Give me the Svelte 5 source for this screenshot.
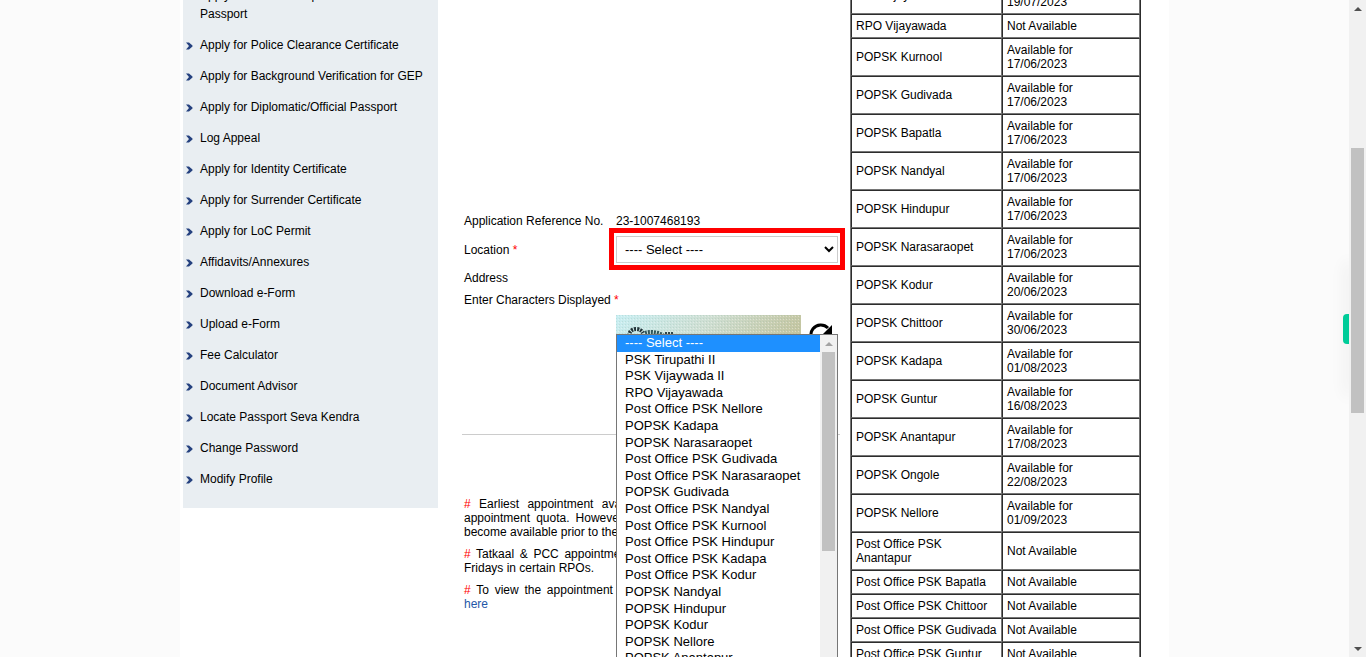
<script>
  const menu = [
    'Apply for Fresh Passport/Reissue of Passport',
    'Apply for Police Clearance Certificate',
    'Apply for Background Verification for GEP',
    'Apply for Diplomatic/Official Passport',
    'Log Appeal',
    'Apply for Identity Certificate',
    'Apply for Surrender Certificate',
    'Apply for LoC Permit',
    'Affidavits/Annexures',
    'Download e-Form',
    'Upload e-Form',
    'Fee Calculator',
    'Document Advisor',
    'Locate Passport Seva Kendra',
    'Change Password',
    'Modify Profile'
  ];

  const locations = [
    '---- Select ----',
    'PSK Tirupathi II',
    'PSK Vijaywada II',
    'RPO Vijayawada',
    'Post Office PSK Nellore',
    'POPSK Kadapa',
    'POPSK Narasaraopet',
    'Post Office PSK Gudivada',
    'Post Office PSK Narasaraopet',
    'POPSK Gudivada',
    'Post Office PSK Nandyal',
    'Post Office PSK Kurnool',
    'Post Office PSK Hindupur',
    'Post Office PSK Kadapa',
    'Post Office PSK Kodur',
    'POPSK Nandyal',
    'POPSK Hindupur',
    'POPSK Kodur',
    'POPSK Nellore',
    'POPSK Anantapur'
  ];

  // date is empty when no appointment is open
  const offices = [
    { name: 'PSK Vijaywada II', date: '19/07/2023' },
    { name: 'RPO Vijayawada', date: '' },
    { name: 'POPSK Kurnool', date: '17/06/2023' },
    { name: 'POPSK Gudivada', date: '17/06/2023' },
    { name: 'POPSK Bapatla', date: '17/06/2023' },
    { name: 'POPSK Nandyal', date: '17/06/2023' },
    { name: 'POPSK Hindupur', date: '17/06/2023' },
    { name: 'POPSK Narasaraopet', date: '17/06/2023' },
    { name: 'POPSK Kodur', date: '20/06/2023' },
    { name: 'POPSK Chittoor', date: '30/06/2023' },
    { name: 'POPSK Kadapa', date: '01/08/2023' },
    { name: 'POPSK Guntur', date: '16/08/2023' },
    { name: 'POPSK Anantapur', date: '17/08/2023' },
    { name: 'POPSK Ongole', date: '22/08/2023' },
    { name: 'POPSK Nellore', date: '01/09/2023' },
    { name: 'Post Office PSK Anantapur', date: '' },
    { name: 'Post Office PSK Bapatla', date: '' },
    { name: 'Post Office PSK Chittoor', date: '' },
    { name: 'Post Office PSK Gudivada', date: '' },
    { name: 'Post Office PSK Guntur', date: '' }
  ];

  let selected = $state(0);
</script>

<div class="window">
  <div class="view">
    <div class="page">
      <nav class="sidebar">
        <ul>
          {#each menu as item}
            <li>
              <svg width="7" height="8" viewBox="0 0 7 8" aria-hidden="true">
                <path d="M0 0.5H3L6.5 3.5V4.5L3 7.5H0L3 4Z" fill="#25417f" />
              </svg>
              <a href="#menu">{item}</a>
            </li>
          {/each}
        </ul>
      </nav>

      <main>
        <form>
          <span>Application Reference No.</span>
          <span>23-1007468193</span>

          <label for="location">Location <i>*</i></label>
          <div class="location">
            <select id="location" bind:value={selected}>
              {#each locations as name, i}
                <option value={i}>{name}</option>
              {/each}
            </select>
            <div class="highlight"></div>
            <div class="popup">
              <ul role="listbox" aria-label="Location">
                {#each locations as name, i}
                  <li role="option" aria-selected={selected === i} class:active={selected === i}>{name}</li>
                {/each}
              </ul>
              <div class="bar">
                <span class="up pale"></span>
                <div class="thumb"></div>
                <span class="down"></span>
              </div>
            </div>
          </div>

          <span>Address</span>
          <span></span>

          <span class="wide">Enter Characters Displayed <i>*</i></span>

          <div class="captcha">
            <svg width="185" height="50" viewBox="0 0 185 50" aria-hidden="true">
              <defs>
                <pattern id="dots" width="3" height="3" patternUnits="userSpaceOnUse">
                  <rect width="1" height="1" fill="#7fa594" opacity="0.2" />
                  <rect x="2" y="1" width="1" height="1" fill="#fff" opacity="0.35" />
                </pattern>
                <linearGradient id="wash" x1="0" y1="0" x2="1" y2="0.2">
                  <stop offset="0" stop-color="#c8eef2" />
                  <stop offset="0.5" stop-color="#cfdfd3" />
                  <stop offset="1" stop-color="#c4c6a2" />
                </linearGradient>
              </defs>
              <rect width="185" height="50" fill="url(#wash)" />
              <rect width="185" height="50" fill="url(#dots)" />
              <path d="M13 24C12 17 16 14 20 14S26 16 27 18" fill="none" stroke="#223338" stroke-width="4" stroke-dasharray="2 1" />
              <path d="M29 18C34 16 41 17 47 20" fill="none" stroke="#31565a" stroke-width="4" stroke-dasharray="2 1" />
              <path d="M49 18H57" stroke="#31464a" stroke-width="2" stroke-dasharray="2 1" />
            </svg>
            <button type="button" aria-label="Refresh characters">
              <svg width="24" height="26" viewBox="0 0 24 26">
                <path d="M21 17A10 10 0 1 1 19 6" fill="none" stroke="#000" stroke-width="3" />
                <path d="M23 3V12H14Z" />
              </svg>
            </button>
          </div>
        </form>

        <hr />

        <section class="notes">
          <p><b>#</b> Earliest appointment availability shown is based on the total appointment quota. However, more appointments could sometimes become available prior to the date shown.</p>
          <p><b>#</b> Tatkaal &amp; PCC appointments may not be made available on the Fridays in certain RPOs.</p>
          <p><b>#</b> To view the appointment availability status of all the PSKs, click <a href="#status">here</a></p>
        </section>
      </main>

      <table>
        <tbody>
          {#each offices as office}
            <tr>
              <td>{office.name}</td>
              <td>
                {#if office.date}
                  Available for<br />{office.date}
                {:else}
                  Not Available
                {/if}
              </td>
            </tr>
          {/each}
        </tbody>
      </table>
    </div>

    <div class="dock"><button type="button" aria-label="Open panel"></button></div>
  </div>

  <div class="bar main-bar">
    <span class="up"></span>
    <div class="thumb"></div>
    <span class="down"></span>
  </div>
</div>

<style>
  :global(body) {
    margin: 0;
    overflow: hidden;
  }

  .window {
    display: flex;
    height: 100vh;
    overflow: hidden;
    background: #fbfbfb;
    color: #000;
    font: 12px/14px "Liberation Sans", Arial, sans-serif;
  }

  .view {
    position: relative;
    flex: 1;
    overflow: hidden;
  }

  .page {
    box-sizing: border-box;
    display: flex;
    align-items: flex-start;
    max-width: 989px;
    min-height: 100%;
    margin: 0 auto;
    padding: 0 28px 0 3px;
    background: #fff;
  }

  ul {
    list-style: none;
    margin: 0;
    padding: 0;
  }

  /* sidebar */
  .sidebar {
    box-sizing: border-box;
    flex: 0 0 255px;
    margin-top: -20px;
    padding-bottom: 13px;
    background: #e9eef2;
  }

  .sidebar li {
    display: flex;
    align-items: flex-start;
    gap: 7px;
    padding: 6px 10px 6px 3px;
    line-height: 19px;
  }

  .sidebar svg {
    flex: none;
    margin-top: 6px;
  }

  .sidebar a {
    color: #000;
    text-decoration: none;
  }

  /* appointment form */
  main {
    flex: 1;
    min-width: 0;
    margin: 0 10px 0 24px;
    padding-top: 214px;
  }

  form {
    display: grid;
    grid-template-columns: 152px 1fr;
    gap: 8px 0;
    align-items: center;
    padding: 0 2px;
  }

  form > span {
    min-height: 14px;
    white-space: nowrap;
  }

  .wide {
    grid-column: 1 / -1;
  }

  i,
  b {
    color: #f00;
    font-style: normal;
    font-weight: normal;
  }

  .location {
    position: relative;
  }

  select {
    display: block;
    width: 100%;
    height: 27px;
    padding: 0 0 0 4px;
    border: 1px solid #ccc;
    border-radius: 0;
    outline: none;
    background-color: #fff;
    color: #000;
    font: 13px "Liberation Sans", Arial, sans-serif;
  }

  .highlight {
    position: absolute;
    inset: -8px -7px -7px -7px;
    border: 5px solid #f00;
    pointer-events: none;
  }

  .popup {
    position: absolute;
    z-index: 1;
    top: 98px;
    left: 0;
    right: 0;
    display: flex;
    border: 1px solid #767676;
    background: #fff;
    font-size: 13px;
  }

  .popup ul {
    display: grid;
    flex: 1;
    grid-auto-rows: 17px 16px 17px 16px 17px;
  }

  .popup li {
    padding-left: 8px;
    line-height: 15px;
    white-space: nowrap;
  }

  .popup .active {
    background: #1e90ff;
    color: #fff;
  }

  .captcha {
    grid-column: 2;
    display: flex;
    align-items: flex-start;
    gap: 8px;
  }

  .captcha svg {
    display: block;
  }

  .captcha button {
    margin-top: 7px;
    padding: 0;
    border: 0;
    background: none;
  }

  hr {
    margin: 69px 0 62px;
    border: 0;
    border-top: 1px solid #ccc;
  }

  .notes {
    padding: 0 4px 0 2px;
    text-align: justify;
  }

  .notes p {
    margin: 0 0 8px;
  }

  .notes a {
    color: #1f57a8;
    text-decoration: none;
  }

  /* availability table */
  table {
    flex: 0 0 291px;
    width: 291px;
    margin-top: -25px;
    border: 1px solid;
    border-color: #767676 #2c2c2c #2c2c2c #767676;
    border-spacing: 0;
    table-layout: fixed;
  }

  td {
    padding: 4px;
    border: 1px solid;
    border-color: #2c2c2c #767676 #767676 #2c2c2c;
  }

  td:first-child {
    width: 141px;
  }

  /* scrollbars */
  .bar {
    display: flex;
    flex: 0 0 17px;
    flex-direction: column;
    align-items: center;
    background: #f1f1f1;
  }

  .thumb {
    width: 13px;
    height: 199px;
    background: #c1c1c1;
  }

  .main-bar .thumb {
    height: 265px;
    margin-top: 131px;
  }

  .up,
  .down {
    display: flex;
    align-items: center;
    justify-content: center;
    height: 17px;
  }

  .down {
    margin-top: auto;
  }

  .up::before,
  .down::before {
    content: "";
    border: solid transparent;
    border-width: 0 4px 4px;
    border-bottom-color: #505050;
  }

  .down::before {
    border-width: 4px 4px 0;
    border-top-color: #505050;
  }

  .up.pale::before {
    border-bottom-color: #a3a3a3;
  }

  /* tab on the window edge */
  .dock {
    position: absolute;
    top: 264px;
    right: 0;
    display: flex;
    align-items: center;
    justify-content: flex-end;
    width: 0;
    height: 130px;
    box-shadow: 0 0 16px 2px rgba(0, 0, 0, 0.12);
  }

  .dock button {
    flex: none;
    width: 6px;
    height: 30px;
    padding: 0;
    border: 0;
    border-radius: 4px 0 0 4px;
    background: #00cc99;
  }
</style>
